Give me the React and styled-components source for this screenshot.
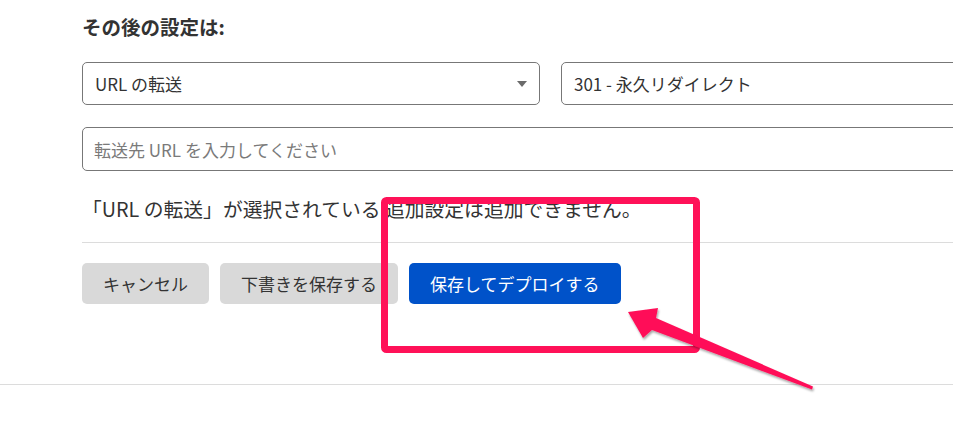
import React from 'react';
import styled, { createGlobalStyle } from 'styled-components';

const GlobalStyle = createGlobalStyle`
  html, body {
    margin: 0;
    padding: 0;
    background: #fff;
    overflow: hidden;
  }
  body {
    font-family: "Noto Sans CJK JP", "Noto Sans", sans-serif;
    color: #333;
  }
`;

const App = () => {
  return (
    <Page>
      <GlobalStyle />
      <Section>
        <Heading>その後の設定は:</Heading>
        <SelectRow>
          <Select>
            <span>URL の転送</span>
            <Caret />
          </Select>
          <Select>
            <span>301 - 永久リダイレクト</span>
          </Select>
        </SelectRow>
        <TextInput placeholder="転送先 URL を入力してください" />
        <Note>「URL の転送」が選択されている 追加設定は追加できません。</Note>
        <Divider />
        <ButtonRow>
          <Button>キャンセル</Button>
          <Button>下書きを保存する</Button>
          <Button primary>保存してデプロイする</Button>
        </ButtonRow>
      </Section>

      <Annotation width="953" height="428" viewBox="0 0 953 428">
        <defs>
          <filter id="shade" x="-10%" y="-10%" width="130%" height="130%">
            <feDropShadow dx="1" dy="2" stdDeviation="1.2" floodColor="#000" floodOpacity="0.35" />
          </filter>
        </defs>
        <rect x="384.5" y="200.5" width="312" height="149" rx="2" fill="none" stroke="#ff1158" strokeWidth="7" />
        <polygon
          filter="url(#shade)"
          fill="#ff1158"
          points="628,312 658,308 656,318 813,386.5 812,389.5 652,330 643,338"
        />
      </Annotation>
    </Page>
  );
};

const Page = styled.div`
  position: relative;
  width: 953px;
  height: 428px;
  overflow: hidden;
`;

const Section = styled.div`
  padding: 13px 0 80px 82px;
  border-bottom: 1px solid #dcdcdc;
`;

const Heading = styled.h2`
  margin: 0;
  font-size: 19.5px;
  line-height: 28px;
  font-weight: 700;
  color: #333;
`;

const SelectRow = styled.div`
  display: grid;
  grid-template-columns: 458px 458px;
  gap: 21px;
  margin-top: 21px;
`;

const Select = styled.div`
  box-sizing: border-box;
  height: 43px;
  display: flex;
  align-items: center;
  justify-content: space-between;
  padding: 0 12px;
  border: 1px solid #777;
  border-radius: 5px;
  font-size: 17px;
  color: #333;
`;

const Caret = styled.span`
  width: 0;
  height: 0;
  border-left: 5px solid transparent;
  border-right: 5px solid transparent;
  border-top: 6px solid #6b6b6b;
`;

const TextInput = styled.input`
  display: block;
  box-sizing: border-box;
  width: 937px;
  height: 44px;
  margin-top: 22px;
  padding: 0 11px;
  border: 1px solid #777;
  border-radius: 5px;
  font-family: inherit;
  font-size: 17px;
  color: #333;
  outline: none;

  &::placeholder {
    color: #7a7a7a;
  }
`;

const Note = styled.p`
  margin: 23px 0 0;
  font-size: 19.8px;
  line-height: 30px;
  color: #333;
  white-space: nowrap;
`;

const Divider = styled.hr`
  margin: 18px 0 0;
  border: none;
  border-top: 1px solid #dcdcdc;
`;

const ButtonRow = styled.div`
  display: flex;
  gap: 11px;
  padding-top: 20px;
`;

const Button = styled.button`
  height: 41px;
  padding: 0 21px;
  border: none;
  border-radius: 5px;
  font-family: inherit;
  font-size: 17px;
  background: ${(props) => (props.primary ? '#0052c9' : '#d9d9d9')};
  color: ${(props) => (props.primary ? '#fff' : '#333')};
  cursor: pointer;
`;

const Annotation = styled.svg`
  position: absolute;
  left: 0;
  top: 0;
  pointer-events: none;
`;

export default App;
